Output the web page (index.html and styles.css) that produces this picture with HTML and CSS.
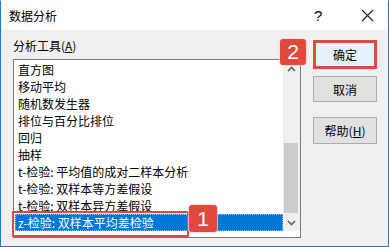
FILE: index.html
```html
<!DOCTYPE html>
<html lang="zh-CN">
<head>
    <meta charset="UTF-8">
    <title>数据分析</title>
    <link rel="stylesheet" href="styles.css">
</head>
<body>
<div class="dialog">
    <div class="titlebar">
        <span class="title">数据分析</span>
        <span class="help">?</span>
        <span class="close">
            <svg width="13" height="13" viewBox="0 0 13 13"><path d="M1 1 L12 12 M12 1 L1 12" stroke="#222" stroke-width="1.1" fill="none"/></svg>
        </span>
    </div>

    <div class="content">
        <div class="tools">
            <div class="label">分析工具(<u>A</u>)</div>
            <div class="listbox">
                <ul class="items">
                    <li>直方图</li>
                    <li>移动平均</li>
                    <li>随机数发生器</li>
                    <li>排位与百分比排位</li>
                    <li>回归</li>
                    <li>抽样</li>
                    <li>t-检验: 平均值的成对二样本分析</li>
                    <li>t-检验: 双样本等方差假设</li>
                    <li>t-检验: 双样本异方差假设</li>
                    <li class="selected">z-检验: 双样本平均差检验</li>
                </ul>
                <div class="scrollbar">
                    <div class="arrow">
                        <svg width="9" height="6" viewBox="0 0 9 6"><path d="M1 5 L4.5 1.5 L8 5" stroke="#606060" stroke-width="1.6" fill="none"/></svg>
                    </div>
                    <div class="track"><div class="thumb"></div></div>
                    <div class="arrow">
                        <svg width="9" height="6" viewBox="0 0 9 6"><path d="M1 1 L4.5 4.5 L8 1" stroke="#606060" stroke-width="1.6" fill="none"/></svg>
                    </div>
                </div>
            </div>
        </div>

        <div class="actions">
            <button class="btn default">确定</button>
            <button class="btn">取消</button>
            <button class="btn help-btn">帮助(<u>H</u>)</button>
        </div>
    </div>

    <!-- callout numbers -->
    <span class="badge badge-1">1</span>
    <span class="badge badge-2">2</span>
</div>
</body>
</html>
```

FILE: styles.css
```css
:root {
    --accent: #1c7bd6;
    --select: #0078d7;
    --mark: #e2493e;
    --face: #f0f0f0;
    --text: #000;
}

* {
    margin: 0;
    padding: 0;
    box-sizing: border-box;
}

body {
    font-family: "Noto Sans CJK SC", "Noto Sans", sans-serif;
    font-size: 12px;
    color: var(--text);
    background: #fff;
}

.dialog {
    position: relative;
    width: 389px;
    height: 247px;
    border: 1px solid var(--accent);
    border-top-color: #fff;
    background: var(--face);
    display: flex;
    flex-direction: column;
}

.titlebar {
    height: 29px;
    background: #fff;
    display: flex;
    align-items: center;
    padding-left: 8px;
}

.title {
    flex: 1;
    line-height: 16px;
}

.help {
    font-family: "Liberation Sans", sans-serif;
    font-size: 15px;
    width: 42px;
    margin-bottom: 1px;
}

.close {
    width: 32px;
    display: flex;
    padding-left: 5px;
}

.content {
    flex: 1;
    display: flex;
    padding: 8px 0 0 12px;
}

.label {
    line-height: 16px;
    margin-bottom: 5px;
}

.listbox {
    position: relative;
    width: 288px;
    height: 179px;
    border: 1px solid #7a7a7a;
    background: #fff;
    display: flex;
    align-items: flex-start;
}

.items {
    flex: 1;
    list-style: none;
    padding: 1px 0 0 1px;
}

.items li {
    height: 17px;
    line-height: 17px;
    padding-left: 3px;
    white-space: nowrap;
}

.items li.selected {
    position: relative;
    background: var(--select);
    color: #fff;
    outline: 1px dotted rgba(255, 255, 255, 0.55);
    outline-offset: -1px;
}

/* red frame round the chosen tool */
.items li.selected::before {
    content: '';
    position: absolute;
    left: -3px;
    top: -3px;
    width: 173px;
    height: 22px;
    border: 2px solid var(--mark);
}

.scrollbar {
    width: 17px;
    height: 171px;
    background: var(--face);
    display: flex;
    flex-direction: column;
}

.arrow {
    height: 17px;
    display: flex;
    align-items: center;
    justify-content: center;
}

.track {
    flex: 1;
    padding: 66px 2px 0 1px;
}

.thumb {
    height: 70px;
    background: #cdcdcd;
}

.actions {
    display: flex;
    flex-direction: column;
    padding: 2px 0 0 12px;
}

.btn {
    width: 64px;
    height: 26px;
    font-family: inherit;
    font-size: 12px;
    color: var(--text);
    background: #e1e1e1;
    border: 1px solid #adadad;
}

.btn u {
    text-underline-offset: 1px;
}

.btn.default {
    height: 29px;
    background: #e5f1fb;
    border: 3px solid var(--mark);
    margin-bottom: 7px;
}

.btn.help-btn {
    margin-top: 15px;
    height: 27px;
}

.badge {
    position: absolute;
    display: flex;
    align-items: center;
    justify-content: center;
    background: var(--mark);
    color: #fff;
    font-family: "Liberation Sans", sans-serif;
    font-size: 21px;
    border-radius: 3px;
    box-shadow: 0 0 0 1px rgba(255, 220, 215, 0.7);
}

.badge-1 {
    left: 188px;
    top: 204px;
    width: 28px;
    height: 27px;
}

.badge-2 {
    left: 279px;
    top: 38px;
    width: 26px;
    height: 26px;
}
```
